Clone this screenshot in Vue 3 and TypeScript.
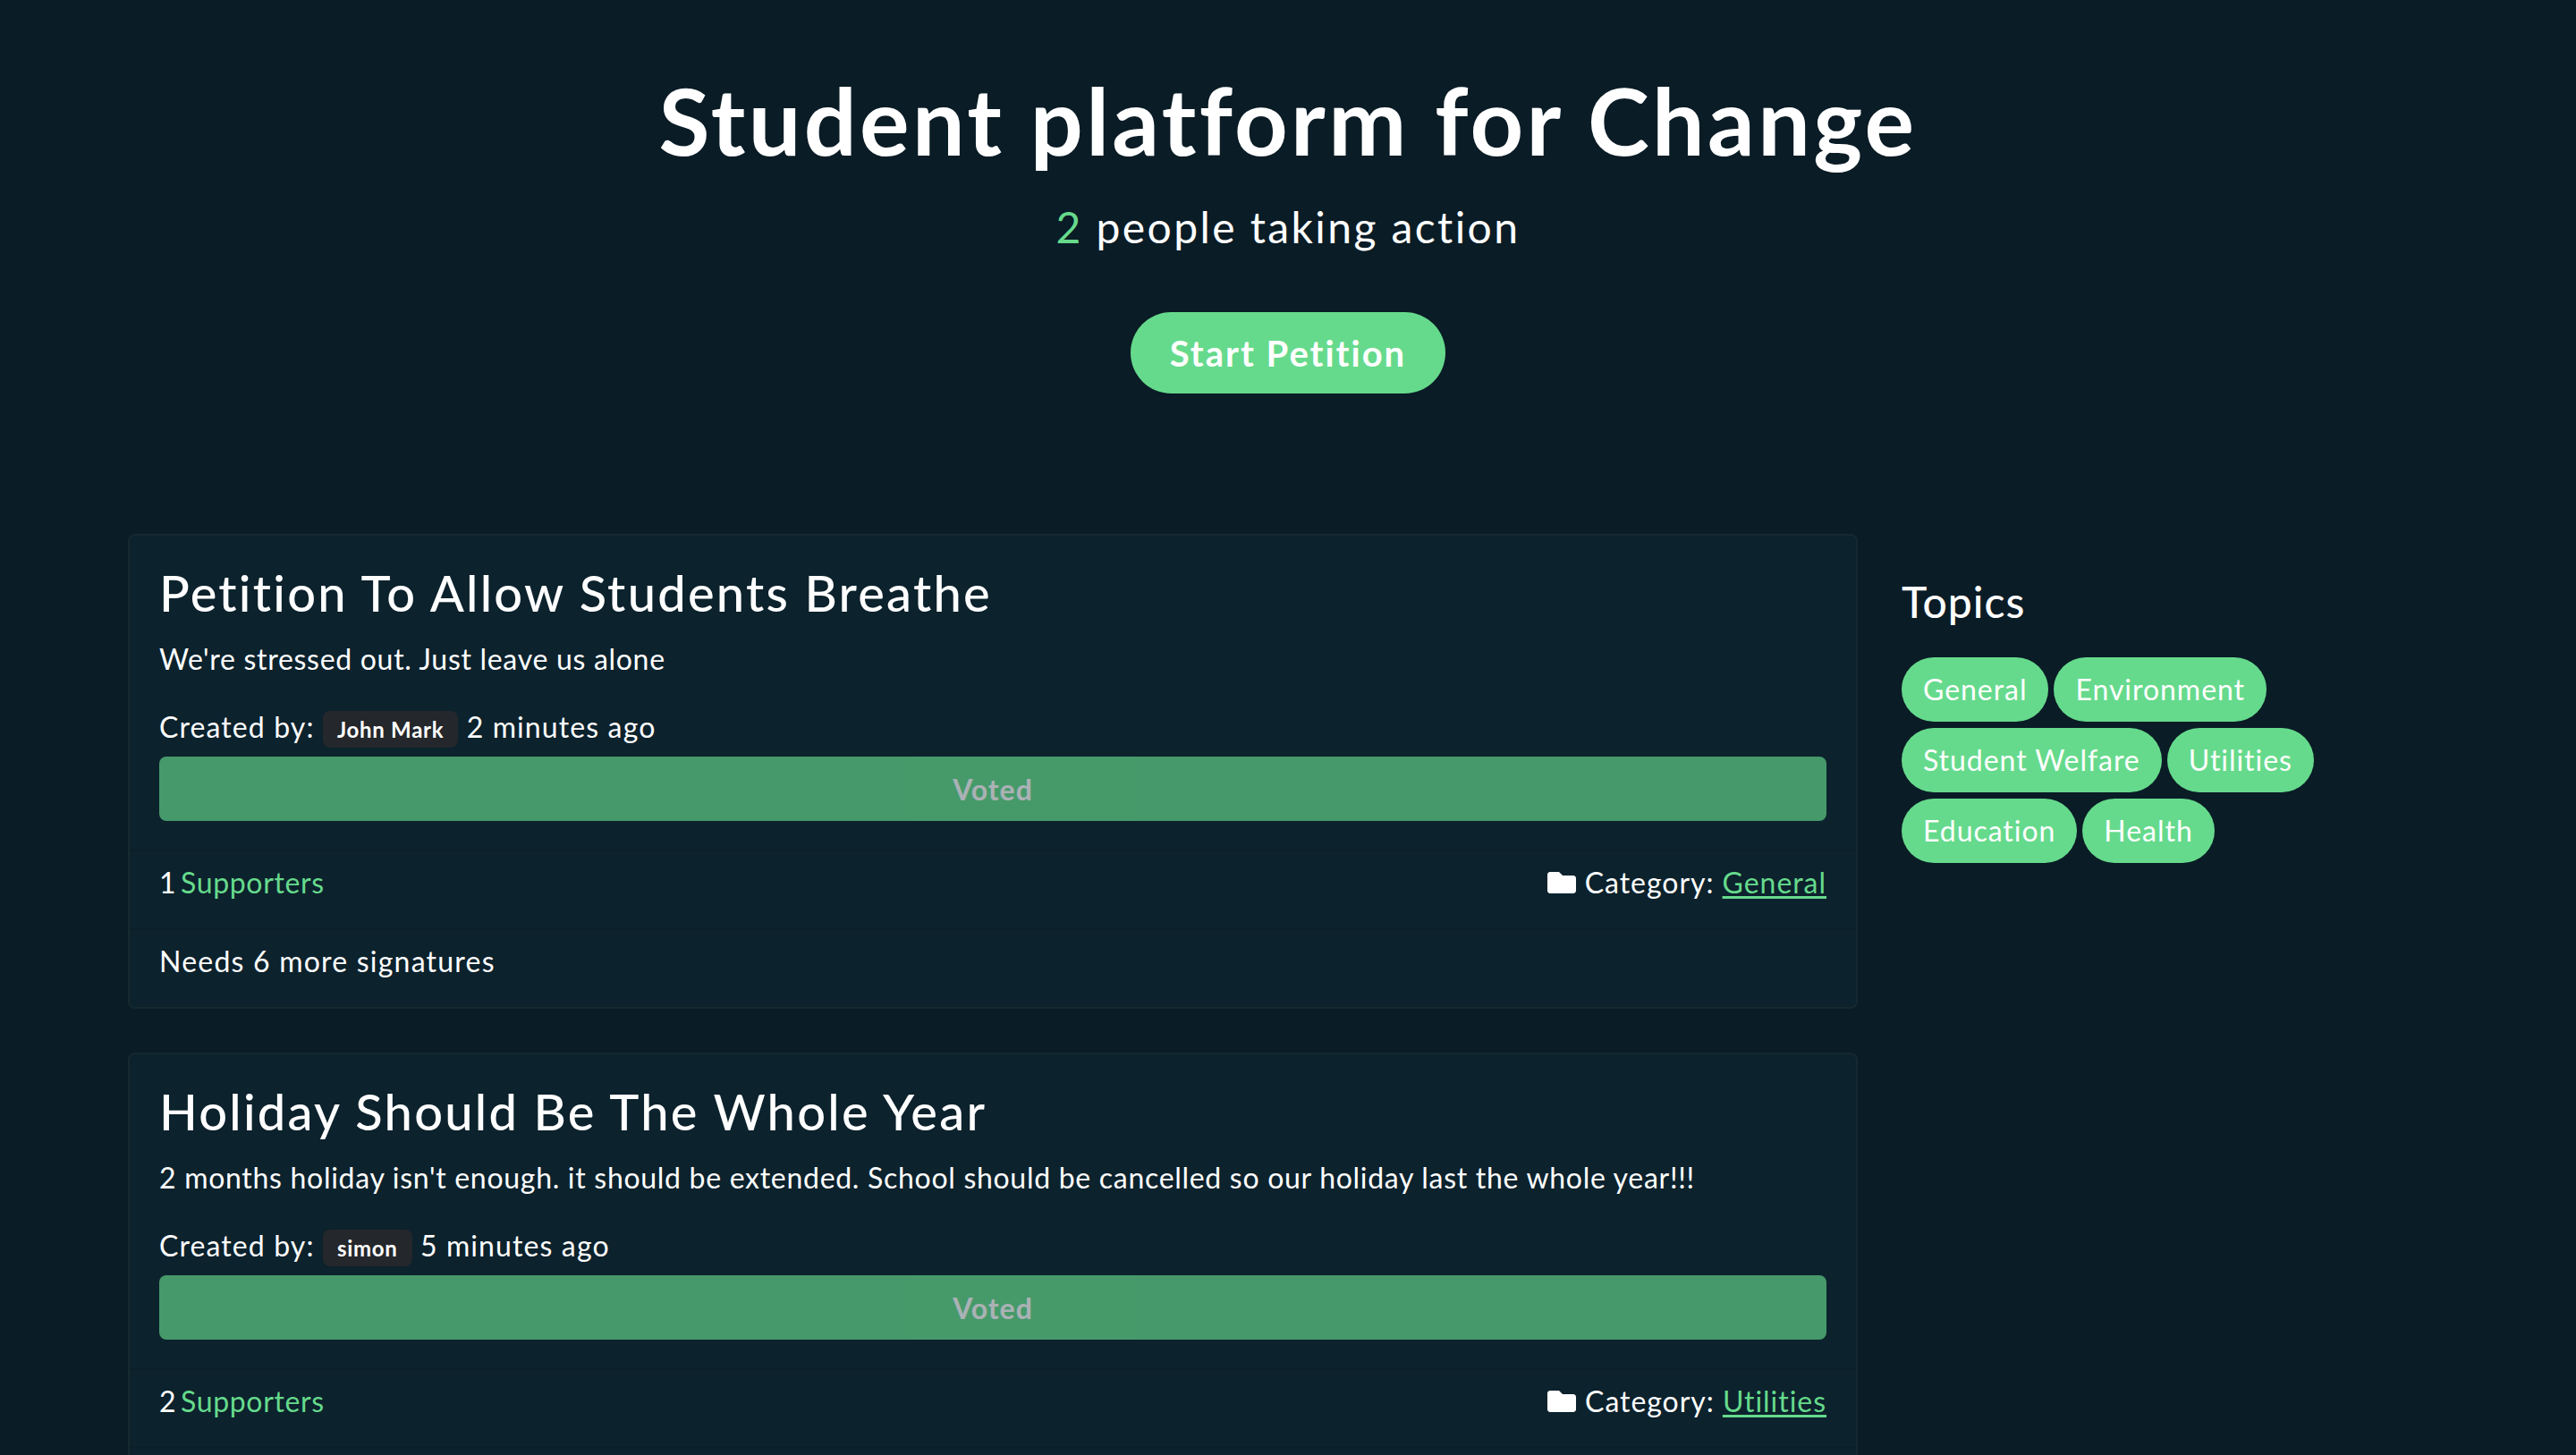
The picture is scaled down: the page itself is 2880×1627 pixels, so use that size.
<script setup lang="ts">
interface Petition {
    title: string;
    body: string;
    author: string;
    age: string;
    supporters: number;
    category: string;
    needs: number;
}

const petitions: Petition[] = [
    {
        title: 'Petition To Allow Students Breathe',
        body: "We're stressed out. Just leave us alone",
        author: 'John Mark',
        age: '2 minutes ago',
        supporters: 1,
        category: 'General',
        needs: 6,
    },
    {
        title: 'Holiday Should Be The Whole Year',
        body: "2 months holiday isn't enough. it should be extended. School should be cancelled so our holiday last the whole year!!!",
        author: 'simon',
        age: '5 minutes ago',
        supporters: 2,
        category: 'Utilities',
        needs: 5,
    },
];

const topics = ['General', 'Environment', 'Student Welfare', 'Utilities', 'Education', 'Health'];
</script>

<template>
    <div class="page">
        <header class="hero">
            <h1 class="hero--title">Student platform for Change</h1>
            <p class="hero--count"><span class="green">2</span> people taking action</p>
            <a class="hero--btn" href="#">Start Petition</a>
        </header>

        <main class="layout">
            <section class="petitions">
                <article class="card" v-for="p in petitions" :key="p.title">
                    <div class="card--body">
                        <h2 class="card--title">{{ p.title }}</h2>
                        <p class="card--text">{{ p.body }}</p>
                        <p class="card--meta">
                            Created by: <span class="badge">{{ p.author }}</span> {{ p.age }}
                        </p>
                        <button class="vote" disabled>Voted</button>
                    </div>
                    <div class="row row--split">
                        <span class="supporters">{{ p.supporters }} <span class="green">Supporters</span></span>
                        <span class="category">
                            <svg class="folder" viewBox="0 0 512 512" fill="#fff">
                                <path d="M464 128H272l-64-64H48C21.49 64 0 85.49 0 112v288c0 26.51 21.49 48 48 48h416c26.51 0 48-21.49 48-48V176c0-26.51-21.49-48-48-48z" />
                            </svg>
                            <span>Category: <a class="green link" href="#">{{ p.category }}</a></span>
                        </span>
                    </div>
                    <div class="row row--needs">Needs {{ p.needs }} more signatures</div>
                </article>
            </section>

            <aside class="topics">
                <h3 class="topics--title">Topics</h3>
                <div class="topics--list">
                    <a class="pill" v-for="t in topics" :key="t" href="#">{{ t }}</a>
                </div>
            </aside>
        </main>
    </div>
</template>

<style>
html, body {
    background: #0a1c26;
}
</style>

<style scoped>
.page {
    min-height: 1627px;
    background: #0a1c26;
    color: #fff;
    font-family: Lato, "Open Sans", sans-serif;
    font-size: 32px;
    letter-spacing: 0.03em;
}

.green {
    color: #66da8c;
}

.hero {
    display: flex;
    flex-direction: column;
    align-items: center;
    padding-top: 69px;
}

.hero--title {
    margin: 0;
    font-size: 104px;
    line-height: 130px;
    font-weight: 700;
    letter-spacing: 0.032em;
}

.hero--count {
    margin: 23px 0 0;
    font-size: 48px;
    line-height: 64px;
    letter-spacing: 0.05em;
}

.hero--btn {
    margin-top: 63px;
    width: 352px;
    height: 91px;
    display: flex;
    align-items: center;
    justify-content: center;
    border-radius: 46px;
    background: #66da8c;
    color: #fff;
    font-size: 40px;
    font-weight: 700;
    letter-spacing: 0.05em;
    text-decoration: none;
}

.layout {
    display: grid;
    grid-template-columns: 1934px 1fr;
    column-gap: 49px;
    padding: 157px 0 0 143px;
}

.card {
    margin-bottom: 49px;
    background: #0c222d;
    border: 2px solid #15292f;
    border-radius: 8px;
}

.card--body {
    padding: 28px 33px 32px;
}

.card--title {
    margin: 0;
    font-size: 56px;
    line-height: 72px;
    font-weight: 500;
    letter-spacing: 0.04em;
}

.card--text {
    margin: 16px 0 0;
    line-height: 44px;
    letter-spacing: 0.022em;
}

.card--meta {
    margin: 32px 0 0;
    line-height: 44px;
    letter-spacing: 0.035em;
}

.badge {
    display: inline-block;
    padding: 0 16px;
    height: 41px;
    line-height: 41px;
    border-radius: 8px;
    background: #24272b;
    font-size: 24px;
    font-weight: 700;
    letter-spacing: 0.03em;
}

.vote {
    display: block;
    width: 100%;
    height: 72px;
    margin-top: 10px;
    border: 0;
    border-radius: 8px;
    background: #66da8c;
    color: #fff;
    font: inherit;
    font-weight: 700;
    letter-spacing: 0.03em;
    opacity: 0.65;
}

.row {
    padding: 12px 33px 28px;
    line-height: 46px;
    border-top: 2px solid rgba(0, 0, 0, 0.08);
}

.row--split {
    display: flex;
    justify-content: space-between;
}

.row--needs {
    letter-spacing: 0.038em;
}

.supporters {
    letter-spacing: 0.02em;
    word-spacing: -4px;
}

.category {
    display: flex;
    align-items: center;
    gap: 10px;
}

.folder {
    width: 32px;
    height: 32px;
}

.link {
    text-decoration: underline;
    text-decoration-thickness: 3px;
    text-underline-offset: 3px;
}

.topics {
    padding-top: 46px;
}

.topics--title {
    margin: 0;
    font-size: 48px;
    line-height: 60px;
    font-weight: 500;
}

.topics--list {
    display: flex;
    flex-wrap: wrap;
    gap: 7px 6px;
    margin-top: 32px;
    max-width: 500px;
}

.pill {
    padding: 0 24px;
    height: 72px;
    line-height: 72px;
    border-radius: 36px;
    background: #66da8c;
    color: #fff;
    text-decoration: none;
}
</style>
